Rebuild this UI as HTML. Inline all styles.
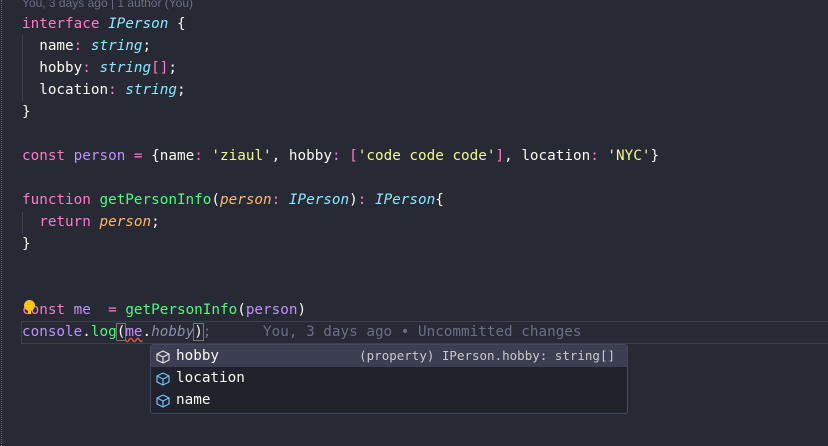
<!DOCTYPE html>
<html><head><style>
html,body{margin:0;padding:0;width:828px;height:446px;overflow:hidden;background:#272935;}
body{position:relative;font-family:"DejaVu Sans Mono","Liberation Mono",monospace;font-size:14.3px;color:#f8f8f2;}
.l{position:absolute;left:22px;height:22px;line-height:22px;white-space:pre;}
.k{color:#ff79c6}.t{color:#8be9fd;font-style:italic}.v{color:#bd93f9}.f{color:#50fa7b}.s{color:#f1fa8c}.p{color:#ffb86c;font-style:italic}
.lens{position:absolute;left:22px;top:-4px;font-family:"Liberation Sans",sans-serif;font-size:12px;color:#6b6f85;}
.guide{position:absolute;left:22px;width:1px;background:#3d4050;}
.dots{position:absolute;left:1px;top:0;height:446px;border-left:1px dotted #4a6a9a;}
.cur{position:absolute;left:21px;top:321px;width:820px;height:21px;border:1px solid #3c3f4e;}
.sug{position:absolute;left:150px;top:344px;width:476px;height:68px;background:#21222c;border:1px solid #44475a;border-radius:3px;}
.row{position:absolute;left:0;width:476px;height:22px;line-height:22px;}
.row span.n{position:absolute;left:25px;font-size:14.3px;}
.row svg{position:absolute;left:4px;top:4px;}
</style></head><body>
<div class="dots"></div>
<div class="lens">You, 3 days ago | 1 author (You)</div>
<div class="guide" style="top:35px;height:66px"></div>
<div class="guide" style="top:212px;height:22px"></div>
<div class="l" style="top:13px"><span class="k">interface</span> <span class="t">IPerson</span> {</div>
<div class="l" style="top:35px">  name<span class="k">:</span> <span class="t">string</span>;</div>
<div class="l" style="top:57px">  hobby<span class="k">:</span> <span class="t">string</span><span class="k">[]</span>;</div>
<div class="l" style="top:79px">  location<span class="k">:</span> <span class="t">string</span>;</div>
<div class="l" style="top:101px">}</div>
<div class="l" style="top:145px"><span class="k">const</span> <span class="v">person</span> <span class="k">=</span> {name<span class="k">:</span> <span class="s">'ziaul'</span>, hobby<span class="k">:</span> <span class="k">[</span><span class="s">'code code code'</span><span class="k">]</span>, location<span class="k">:</span> <span class="s">'NYC'</span>}</div>
<div class="l" style="top:189px"><span class="k">function</span> <span class="f">getPersonInfo</span>(<span class="p">person</span><span class="k">:</span> <span class="t">IPerson</span>)<span class="k">:</span> <span class="t">IPerson</span>{</div>
<div class="l" style="top:211px">  <span class="k">return</span> <span class="p">person</span>;</div>
<div class="l" style="top:233px">}</div>
<div class="cur"></div>
<div class="l" style="top:299px"><span class="k">const</span> <span class="v">me</span>  <span class="k">=</span> <span class="f">getPersonInfo</span>(<span class="v">person</span>)</div>
<div style="position:absolute;left:24px;top:300px;width:11px;height:11px;border-radius:50%;background:#f5c518"></div>
<div style="position:absolute;left:28px;top:310px;width:3px;height:4px;background:#f5c518"></div>
<div class="l" style="top:321px"><span class="v">console</span>.<span class="f">log</span><span style="outline:1px solid #777;">(</span><span class="v" style="text-decoration:underline wavy #e05050;">me</span>.<span style="color:#8a8ea8;font-style:italic">hobby</span><span style="outline:1px solid #777;">)</span><span style="color:#6b6f85">;      You, 3 days ago • Uncommitted changes</span></div>
<div class="sug">
 <div class="row" style="top:0;background:#3c3f51;"><svg width="16" height="16" viewBox="0 0 16 16" fill="none" stroke="#e0e0e0" stroke-width="1.2"><path d="M8 2L14 5V11L8 14L2 11V5Z M2 5L8 8L14 5 M8 8V14"/></svg><span class="n">hobby</span><span style="position:absolute;right:12px;color:#c8c8d0;font-size:12.5px">(property) IPerson.hobby: string[]</span></div>
 <div class="row" style="top:22px"><svg width="16" height="16" viewBox="0 0 16 16" fill="none" stroke="#75beff" stroke-width="1.2"><path d="M8 2L14 5V11L8 14L2 11V5Z M2 5L8 8L14 5 M8 8V14"/></svg><span class="n">location</span></div>
 <div class="row" style="top:44px"><svg width="16" height="16" viewBox="0 0 16 16" fill="none" stroke="#75beff" stroke-width="1.2"><path d="M8 2L14 5V11L8 14L2 11V5Z M2 5L8 8L14 5 M8 8V14"/></svg><span class="n">name</span></div>
</div>
</body></html>
